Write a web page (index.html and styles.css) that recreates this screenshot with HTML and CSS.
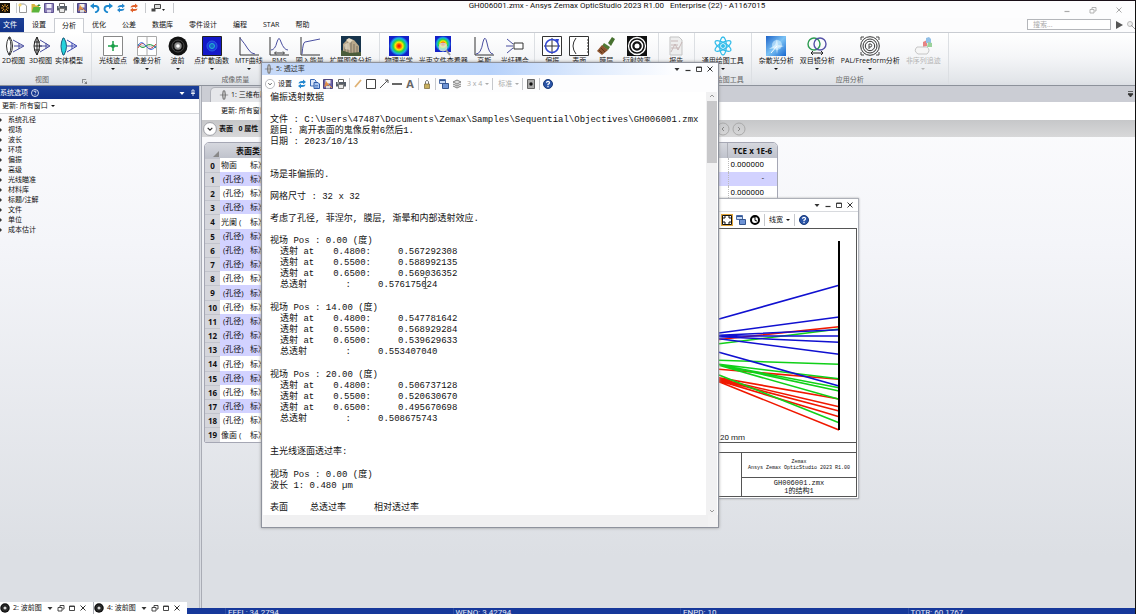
FILE: index.html
```html
<!DOCTYPE html>
<html lang="zh-CN">
<head>
<meta charset="utf-8">
<title>GH006001.zmx - Ansys Zemax OpticStudio</title>
<link rel="stylesheet" href="styles.css">
</head>
<body>
<svg class="defs" aria-hidden="true">
  <defs>
    <symbol id="refresh" viewBox="0 0 10 10"><path d="M1.5 4.5Q2 2 5 2h1V.5L9 3 6 5.200V4H5Q3 4 1.500 4.500zM8.500 5.500Q8 8 5 8H4v1.500L1 7l3-2.200V6h1q2 0 3.500-.5z" fill="currentColor"/></symbol>
    <symbol id="save" viewBox="0 0 10 10"><path d="M.5.5h9v9h-9z" fill="#8d80b8" stroke="#5c5190"/><path d="M2.500 1h5v4h-5z" fill="#f3f1fb"/><path d="M3 7h4v2.500H3z" fill="#dcd7ee"/></symbol>
    <symbol id="saveas" viewBox="0 0 10 10"><path d="M.5.5h9v9h-9z" fill="#6c62a8" stroke="#4c4580"/><path d="M2.500 1h5v3.500h-5z" fill="#f5efe8"/><path d="M3 7h4v2.500H3z" fill="#ddd"/><path d="M1 8l2-6 3 4z" fill="#d98a4e"/><path d="M3 3l6 6" stroke="#f2a13c"/></symbol>
    <symbol id="print" viewBox="0 0 10 10"><path d="M2.500 3V.5h5V3" fill="#fff" stroke="#666"/><path d="M0 3h10v4.500H0z" fill="#555c66"/><path d="M2.500 5.500h5v4h-5z" fill="#e8e8e8" stroke="#777"/><path d="M1 4h2" stroke="#ddd"/></symbol>
    <symbol id="copy" viewBox="0 0 10 10"><path d="M.5.5h4L6 2v5H.5z" fill="#dce8fa" stroke="#3a68b4"/><path d="M4 3.500h4L9.500 5v4.500H4z" fill="#a9c6f1" stroke="#2f5ba8"/><path d="M5 6.500h3M5 8h3" stroke="#2f5ba8" stroke-width=".6"/></symbol>
    <symbol id="help" viewBox="0 0 10 10"><circle cx="5" cy="5" r="4.500" fill="#2b55a8" stroke="#173877"/><path d="M3.500 3.800Q3.500 2.300 5 2.300t1.500 1.400Q6.500 4.600 5 5.400v.8M5 7v1.200" fill="none" stroke="#fff" stroke-width="1.200"/></symbol>
    <symbol id="chevron" viewBox="0 0 12 12"><circle cx="6" cy="6" r="5.500" fill="#fff" stroke="#9a9ca3" stroke-width=".8"/><path d="M4 5l2 2 2-2" fill="none" stroke="#333"/></symbol>
    <symbol id="windows" viewBox="0 0 10 10"><path d="M.5.5h6v4h-6z" fill="#c9dbf6" stroke="#4b6ca8"/><path d="M3.500 4.500h6v5h-6z" fill="#6e93d4" stroke="#34558f"/><path d="M1 1.500h5" stroke="#34558f"/></symbol>
    <symbol id="lens" viewBox="0 0 10 12"><path d="M4 1h2q2 5 0 10H4q-2-5 0-10z" fill="#ddd" stroke="#555" stroke-width=".8"/><path d="M0 6h10M5 1v10" stroke="#666" stroke-width=".7"/></symbol>
    <symbol id="disc" viewBox="0 0 20 20"><circle cx="10" cy="10" r="9.500" fill="#111"/><circle cx="10" cy="10" r="6" fill="none" stroke="#4a4a4a"/><circle cx="10" cy="10" r="3.700" fill="#8b8b8b"/><circle cx="10" cy="10" r="1.800" fill="#fff"/></symbol>
    <symbol id="w-down" viewBox="0 0 8 8"><path d="M1.500 3h5L4 6z" fill="currentColor"/></symbol>
    <symbol id="w-min" viewBox="0 0 8 8"><path d="M1.500 5.500h5" stroke="currentColor" stroke-width="1.200"/></symbol>
    <symbol id="w-max" viewBox="0 0 8 8"><path d="M1.500 2h5v4.500h-5zM1.500 2.500h5" fill="none" stroke="currentColor" stroke-width=".9"/></symbol>
    <symbol id="w-restore" viewBox="0 0 8 8"><path d="M1 3.500h4V7H1zM3 3V1.500h4V5H5.500" fill="none" stroke="currentColor" stroke-width=".9"/></symbol>
    <symbol id="w-close" viewBox="0 0 8 8"><path d="M1.500 1.500l5 5m0-5l-5 5" stroke="currentColor"/></symbol>
    <radialGradient id="rainbow"><stop offset="0" stop-color="#e80000"/><stop offset=".2" stop-color="#ff5a00"/><stop offset=".38" stop-color="#ffe800"/><stop offset=".58" stop-color="#22d84a"/><stop offset=".78" stop-color="#18a9e8"/><stop offset="1" stop-color="#1420c8"/></radialGradient>
    <linearGradient id="sky" x2="1" y2="1"><stop offset="0" stop-color="#1d62c8"/><stop offset=".5" stop-color="#7cc3f5"/><stop offset="1" stop-color="#1566cf"/></linearGradient>
  </defs>
</svg>

<div class="app">
  <header class="titlebar">
    <div class="quick">
      <svg class="i10" viewBox="0 0 10 10"><path d="M0 0h10v10H0z" fill="#17110a"/><path d="M5 1v8M1 5h8M2 2l6 6M8 2L2 8" stroke="#d8922c"/><circle cx="5" cy="5" r="1.500" fill="#17110a"/></svg>
      <i class="sep near"></i>
      <button aria-label="新建"><svg class="i10" viewBox="0 0 10 10"><path d="M1.500 1h5l2 2v6.500h-7z" fill="#fff" stroke="#999"/><circle cx="2" cy="2" r="1.600" fill="#f4d66b"/></svg></button>
      <button aria-label="打开"><svg class="i10" viewBox="0 0 10 10"><path d="M.5 1h3l1 1.500H8V9H.5z" fill="#d7b33e"/><path d="M2.500 4H10L8 9.500H.5z" fill="#5bb43b"/><path d="M6 3l2-2 1.500 2z" fill="#2e8b2b"/></svg></button>
      <button aria-label="保存"><svg class="i10"><use href="#save"/></svg></button>
      <button aria-label="打印"><svg class="i10"><use href="#print"/></svg></button>
      <i class="sep"></i>
      <button aria-label="另存"><svg class="i10"><use href="#saveas"/></svg></button>
      <button aria-label="撤销"><svg class="i10" viewBox="0 0 10 10"><path d="M2 3h4q2.500.5 2.500 3T5 9.500" fill="none" stroke="#1c88cf" stroke-width="1.800"/><path d="M0 3l4-3v6z" fill="#1c88cf"/></svg></button>
      <button aria-label="重做"><svg class="i10" viewBox="0 0 10 10"><path d="M8 3H4q-2.500.5-2.500 3T5 9.500" fill="none" stroke="#1c88cf" stroke-width="1.800"/><path d="M10 3L6 0v6z" fill="#1c88cf"/></svg></button>
      <button aria-label="更新" class="blue"><svg class="i10"><use href="#refresh"/></svg></button>
      <button aria-label="全部更新" class="orange"><svg class="i10"><use href="#refresh"/></svg></button>
      <i class="sep"></i>
      <button aria-label="窗口" class="wide"><svg class="i14" viewBox="0 0 14 10"><path d="M3.500 1.500h6v4h-6z" fill="#ddd" stroke="#444"/><path d="M.5 5.500h4v3h-4z" fill="#444"/><path d="M11 6h3l-1.500 2z" fill="#222"/></svg></button>
      <i class="sep"></i>
    </div>
    <h1>GH006001.zmx - Ansys Zemax OpticStudio 2023 R1.00 &nbsp; Enterprise (22) - A1167015</h1>
    <div class="syscontrols">
      <button aria-label="最小化"><svg class="i8"><use href="#w-min"/></svg></button>
      <button aria-label="还原"><svg class="i8"><use href="#w-restore"/></svg></button>
      <button aria-label="关闭"><svg class="i8"><use href="#w-close"/></svg></button>
    </div>
  </header>

  <nav class="menu">
    <button class="file">文件</button><button>设置</button><button class="active">分析</button><button>优化</button><button>公差</button><button>数据库</button><button>零件设计</button><button>编程</button><button>STAR</button><button>帮助</button>
    <div class="find">
      <input type="text" placeholder="搜索..." aria-label="搜索">
      <button aria-label="开始"><svg class="i8" viewBox="0 0 8 8"><path d="M1 0l7 4-7 4z" fill="#555"/></svg></button>
      <button aria-label="查找"><svg class="i8" viewBox="0 0 8 8"><circle cx="3" cy="3" r="2.500" fill="#eee" stroke="#bbb"/><path d="M4 4l4 4" stroke="#999"/></svg></button>
    </div>
  </nav>

  <section class="ribbon">
    <div class="group">
      <div class="items">
        <button><svg viewBox="0 0 20 20"><path d="M5 1q4 9 0 18-5-9 0-18zM5 1h1q5 9 0 18H5" fill="#fff" stroke="#333"/><path d="M9 4l11 6-11 6M10 10h9M15 7v6" fill="none" stroke="#4a4fa0"/></svg>2D视图</button>
        <button><svg viewBox="0 0 20 20"><path d="M6 1q5 9 0 18-6-9 0-18zM6 1v18M3 10h8M3 6h6M3 14h6" fill="#eee" stroke="#222"/><path d="M9 4l10 6-10 6M9 10h9M15 7v6" fill="none" stroke="#4a4fa0"/></svg>3D视图</button>
        <button><svg viewBox="0 0 20 20"><path d="M5 2q5 8 0 17h-1q-4-9 0-17z" fill="#25d3dc" stroke="#1b5d7d"/><path d="M8 4l10 6-10 6M8 10h9M13 7v6" fill="none" stroke="#3c48b0"/></svg>实体模型</button>
      </div>
      <footer>视图</footer>
      <svg class="launcher" viewBox="0 0 6 6"><path d="M.5 5V.5H5M3 3l2.500 2.500M5.500 3v2.500H3" fill="none" stroke="#555" stroke-width=".8"/></svg>
    </div>
    <div class="group">
      <div class="items">
        <button class="drop"><svg viewBox="0 0 20 20"><path d="M.5.5h19v19H.5z" fill="#fff" stroke="#888"/><path d="M10 5v10M5 10h10" stroke="#1ba048" stroke-width="1.500"/><circle cx="10" cy="10" r="2" fill="#1ba048"/></svg>光线迹点</button>
        <button class="drop"><svg viewBox="0 0 20 20"><path d="M.5.5h19v19H.5zM0 10h20M10 0v20" fill="#fff" stroke="#aaa"/><path d="M1 8q4 6 8 2t10 2" fill="none" stroke="#2ba54c"/><path d="M1 12q4-8 8-2t10-2" fill="none" stroke="#d04848"/><path d="M1 10q3-7 8 0t10 0" fill="none" stroke="#3a6ce0"/></svg>像差分析</button>
        <button class="drop"><svg><use href="#disc"/></svg>波前</button>
        <button class="drop"><svg viewBox="0 0 20 20"><path d="M.5.500h19v19H.5z" fill="#1418c8" stroke="#222"/><circle cx="10" cy="10" r="5" fill="#1b35df" stroke="#2860e0"/><circle cx="10" cy="10" r="2.500" fill="#1765c9" stroke="#25b7cf"/></svg>点扩散函数</button>
        <button class="drop"><svg viewBox="0 0 20 20"><path d="M1 1v18h19" fill="none" stroke="#333"/><path d="M1 2q5 6 8 11 3 5 7 5" fill="none" stroke="#4a4fa0"/></svg>MTF曲线</button>
        <button class="drop"><svg viewBox="0 0 20 20"><path d="M1 1v18h19M6 17h9M7 15.500L5.500 17 7 18.500M14 15.500l1.500 1.500-1.500 1.500" fill="none" stroke="#333"/><path d="M2 14q4 0 6-8 2-7 4 0 3 8 7 8" fill="none" stroke="#4a4fa0"/></svg>RMS</button>
        <button class="drop"><svg viewBox="0 0 20 20"><path d="M1 1v18h19" fill="none" stroke="#333"/><path d="M2 18Q3 6 5 6l15-3" fill="none" stroke="#4a4fa0"/></svg>圈入能量</button>
        <button class="drop"><svg viewBox="0 0 20 20"><path d="M0 0h20v20H0z" fill="#17344c"/><path d="M2 16V8l5-5 6 1 5 6v7l-6 2z" fill="#b9a88b"/><path d="M4 9v7M7 6v11M10 5v12M13 8v9M16 10v7" stroke="#5f5a50" stroke-width=".7"/><path d="M0 14l9 3 11-1v4H0z" fill="#4b5c3a"/><path d="M5 4l3-2 4 2-3 3z" fill="#e8dcc3"/><path d="M3 9l5-3 1 8-5-1z" fill="#e6dcc8" fill-opacity=".7"/></svg>扩展图像分析</button>
      </div>
      <footer>成像质量</footer>
    </div>
    <div class="group tight">
      <div class="items">
        <button class="drop"><svg viewBox="0 0 20 20"><path d="M0 0h20v20H0z" fill="#1420c8"/><circle cx="10" cy="10" r="10" fill="url(#rainbow)"/></svg>物理光学</button>
        <button class="drop"><svg viewBox="0 0 20 20"><path d="M2 0h16v16H2z" fill="#1420c8"/><circle cx="10" cy="8" r="8" fill="url(#rainbow)"/><circle cx="10" cy="11" r="4" fill="#dcecf0" fill-opacity=".7" stroke="#ccc"/><path d="M13 14l4 5" stroke="#999" stroke-width="2"/></svg>光束文件查看器</button>
        <button class="drop"><svg viewBox="0 0 20 20"><path d="M1 1v18h19" fill="none" stroke="#333"/><path d="M2 18q5 0 7-12 2-8 4 1 2 11 6 11" fill="none" stroke="#4a4fa0"/></svg>高斯</button>
        <button class="drop"><svg viewBox="0 0 20 20"><path d="M9 7h9v6H9z" fill="#fff" stroke="#333"/><path d="M2 3l6 5M1 10h7M2 17l6-5" stroke="#4a4fa0"/></svg>光纤耦合</button>
      </div>
      <footer>激光与光纤</footer>
    </div>
    <div class="group">
      <div class="items">
        <button class="drop"><svg viewBox="0 0 20 20"><path d="M.5.5h19v19H.5zM10 2v16M2 10h16" fill="#fff" stroke="#333"/><circle cx="10" cy="10" r="6.500" fill="none" stroke="#3146cf" stroke-width="1.500"/><path d="M13 3l4 0-1 4z" fill="#3146cf"/></svg>偏振</button>
        <button class="drop"><svg viewBox="0 0 20 20"><path d="M.5.5h19v19H.5z" fill="#fff" stroke="#333"/><path d="M7 2Q1 10 7 18M18 4h1M18 7h1M18 10h1M18 13h1M18 16h1" fill="none" stroke="#333"/></svg>表面</button>
        <button class="drop"><svg viewBox="0 0 20 20"><path d="M12 7l4-6 3 2-4 7z" fill="#46702f"/><path d="M8 7l6 4-2 3-6-4z" fill="#4f7a35"/><path d="M6 9l6 5-6 5-5-4z" fill="#8c5430"/><path d="M3 14l3 3M5 12l4 4" stroke="#5f3319"/></svg>膜层</button>
        <button class="drop"><svg viewBox="0 0 20 20"><path d="M0 0h20v20H0z" fill="#111"/><circle cx="10" cy="10" r="8.500" fill="none" stroke="#fff" stroke-width="1.300"/><circle cx="10" cy="10" r="5.500" fill="none" stroke="#fff" stroke-width="1.500"/><circle cx="10" cy="10" r="2.500" fill="#fff"/></svg>衍射效率</button>
      </div>
      <footer>偏振与表面</footer>
    </div>
    <div class="group">
      <div class="items">
        <button class="drop"><svg viewBox="0 0 20 20"><path d="M4 1h9l3 3v15H4z" fill="#eee" stroke="#c3c3c3"/><path d="M5 16l4-8 3 6 4-8M5 5h7M5 9h7M5 12h8" fill="none" stroke="#c8b8b8"/></svg>报告</button>
      </div>
      <footer>报告</footer>
    </div>
    <div class="group">
      <div class="items">
        <button class="drop"><svg viewBox="0 0 20 20"><g fill="none" stroke="#35bdea" stroke-width="1.300"><ellipse cx="10" cy="10" rx="9" ry="3.300" transform="rotate(30 10 10)"/><ellipse cx="10" cy="10" rx="9" ry="3.300" transform="rotate(90 10 10)"/><ellipse cx="10" cy="10" rx="9" ry="3.300" transform="rotate(150 10 10)"/></g><circle cx="10" cy="10" r="2" fill="#35bdea"/></svg>通用绘图工具</button>
      </div>
      <footer>通用绘图工具</footer>
    </div>
    <div class="group">
      <div class="items">
        <button class="drop"><svg viewBox="0 0 20 20"><path d="M0 0h20v20H0z" fill="url(#sky)"/><circle cx="11" cy="9" r="5" fill="#d3efff" fill-opacity=".6"/><path d="M3 13l6-4 2-6 1 6 6 1-6 2-1 6-1-6z" fill="#e6f6ff" fill-opacity=".7"/><path d="M5 17l6-7" stroke="#fff"/></svg>杂散光分析</button>
        <button class="drop"><svg viewBox="0 0 20 20"><circle cx="7" cy="8" r="6" fill="none" stroke="#2c9b50" stroke-width="1.400"/><circle cx="13" cy="8" r="6" fill="none" stroke="#5552a8" stroke-width="1.400"/><path d="M4 17h12M6 15l-2 2 2 2M14 15l2 2-2 2" fill="none" stroke="#222"/></svg>双目镜分析</button>
        <button class="drop"><svg viewBox="0 0 20 20"><g fill="none" stroke="#333"><circle cx="10" cy="10" r="9.300"/><circle cx="10" cy="10" r="7"/><circle cx="10" cy="10" r="4.700"/><path d="M9 13V8h2q1.500 1.300 0 3H9M1 4V1h3M16 1h3v3M1 16v3h3M16 19h3v-3" stroke-width=".9"/></g></svg>PAL/Freeform分析</button>
        <button class="drop" disabled><svg viewBox="0 0 20 20"><path d="M10 6l4-2v6l-4 1z" fill="#e78484"/><path d="M13 2l3-1 2 2v4h-5z" fill="#91bfe6"/><path d="M15 6l4 1v4h-5z" fill="#9bd29b"/><path d="M4 11h10q4 3 0 7H5q-5-3-1-7z" fill="#f6f6f6" stroke="#c6c6c6"/></svg>非序列追迹</button>
      </div>
      <footer>应用分析</footer>
    </div>
  </section>

  <main class="workspace">
    <aside class="sidebar">
      <div class="panelhead"><span>系统选项</span><svg class="i8" viewBox="0 0 8 8"><circle cx="4" cy="4" r="3.500" fill="none" stroke="#fff" stroke-width=".8"/><path d="M3 3q0-1 1-1t1 1q0 .7-1 1.200M4 5.300v.9" fill="none" stroke="#fff" stroke-width=".8"/></svg><i class="grow"></i><svg class="i8"><use href="#w-down"/></svg><svg class="i8" viewBox="0 0 8 8"><path d="M3 1h2v3H3zM2 4.500h4M4 4.500V7" fill="none" stroke="#fff" stroke-width=".8"/></svg></div>
      <button class="update">更新: 所有窗口<i class="caret"></i></button>
      <ul class="tree">
        <li>系统孔径</li><li>视场</li><li>波长</li><li>环境</li><li>偏振</li><li>高级</li><li>光线瞄准</li><li>材料库</li><li>标题/注解</li><li>文件</li><li>单位</li><li>成本估计</li>
      </ul>
    </aside>

    <section class="editor">
      <div class="doctabs"><button><svg class="i10"><use href="#lens"/></svg>1: 三维布局图</button><i class="grow"></i><svg class="i8" viewBox="0 0 8 8"><path d="M2 1.500h5M2 4l2.500 3L7 4zM2 3.500h5" fill="#333" stroke="#333" stroke-width=".7"/></svg></div>
      <button class="update wideupdate">更新: 所有窗口<i class="caret"></i></button>
      <div class="surface">
        <svg class="i14"><use href="#chevron"/></svg><b>表面 &nbsp; 0 属性</b>
        <div class="pager"><svg class="i14" viewBox="0 0 14 14"><circle cx="7" cy="7" r="6" fill="none" stroke="#aaa"/><path d="M8 5L6 7l2 2" fill="none" stroke="#888"/></svg><svg class="i14" viewBox="0 0 14 14"><circle cx="7" cy="7" r="6" fill="none" stroke="#aaa"/><path d="M6 5l2 2-2 2" fill="none" stroke="#888"/></svg></div>
      </div>
      <table class="lde">
        <thead><tr><th class="no"><svg class="i8" viewBox="0 0 8 8"><path d="M8 2v6H2z" fill="#888"/></svg></th><th class="type">表面类型</th><th class="mid">净口径</th><th class="tce">TCE x 1E-6</th></tr></thead>
        <tbody>
          <tr><th>0</th><td><span class="name">物面</span>标准面</td><td></td><td>0.000000</td></tr>
          <tr class="hl"><th>1</th><td><span>(孔径)</span>标准面</td><td></td><td>-</td></tr>
          <tr><th>2</th><td><span>(孔径)</span>标准面</td><td></td><td>0.000000</td></tr>
          <tr class="hl"><th>3</th><td><span>(孔径)</span>标准面</td><td></td><td>-</td></tr>
          <tr><th>4</th><td><span class="name">光阑 (</span>标准面</td><td></td><td>0.000000</td></tr>
          <tr class="hl"><th>5</th><td><span>(孔径)</span>标准面</td><td></td><td>-</td></tr>
          <tr class="hl"><th>6</th><td><span>(孔径)</span>标准面</td><td></td><td>-</td></tr>
          <tr class="hl"><th>7</th><td><span>(孔径)</span>标准面</td><td></td><td>-</td></tr>
          <tr><th>8</th><td><span>(孔径)</span>标准面</td><td></td><td>0.000000</td></tr>
          <tr class="hl"><th>9</th><td><span>(孔径)</span>标准面</td><td></td><td>-</td></tr>
          <tr><th>10</th><td><span>(孔径)</span>标准面</td><td></td><td>0.000000</td></tr>
          <tr class="hl"><th>11</th><td><span>(孔径)</span>标准面</td><td></td><td>-</td></tr>
          <tr class="hl"><th>12</th><td><span>(孔径)</span>标准面</td><td></td><td>-</td></tr>
          <tr class="hl"><th>13</th><td><span>(孔径)</span>标准面</td><td></td><td>-</td></tr>
          <tr><th>14</th><td><span>(孔径)</span>标准面</td><td></td><td>0.000000</td></tr>
          <tr class="hl"><th>15</th><td><span>(孔径)</span>标准面</td><td></td><td>-</td></tr>
          <tr><th>16</th><td><span>(孔径)</span>标准面</td><td></td><td>0.000000</td></tr>
          <tr class="hl"><th>17</th><td><span>(孔径)</span>标准面</td><td></td><td>-</td></tr>
          <tr><th>18</th><td><span>(孔径)</span>标准面</td><td></td><td>0.000000</td></tr>
          <tr><th>19</th><td><span class="name">像面 (</span>标准面</td><td></td><td>0.000000</td></tr>
        </tbody>
      </table>
    </section>
  </main>

  <footer class="status"><span>EFFL: 34.2794</span><span>WFNO: 3.42794</span><span>ENPD: 10</span><span>TOTR: 60.1767</span></footer>
</div>

<section class="window layout">
  <header><i class="grow"></i><button aria-label="菜单"><svg class="i8"><use href="#w-down"/></svg></button><button aria-label="最小化"><svg class="i8"><use href="#w-min"/></svg></button><button aria-label="最大化"><svg class="i8"><use href="#w-max"/></svg></button><button aria-label="关闭"><svg class="i8"><use href="#w-close"/></svg></button></header>
  <div class="tools">
    <button class="on" aria-label="适合窗口"><svg class="i10" viewBox="0 0 10 10"><path d="M.5.500h9v9h-9z" fill="#fff" stroke="#111"/><path d="M2 4V2h2M6 2h2v2M8 6v2H6M4 8H2V6" fill="none" stroke="#111"/></svg></button>
    <button aria-label="窗口"><svg class="i10"><use href="#windows"/></svg></button>
    <button aria-label="重置"><svg class="i10" viewBox="0 0 10 10"><circle cx="5" cy="5" r="4" fill="#fff" stroke="#000" stroke-width="2"/><path d="M5 2v3.500L7 6M3.500 3L5 1.500" fill="none" stroke="#000"/></svg></button>
    <i class="sep"></i><button class="text">线宽<i class="caret"></i></button><i class="sep"></i>
    <button aria-label="帮助"><svg class="i10"><use href="#help"/></svg></button>
  </div>
  <div class="plot">
    <svg viewBox="0 0 256 213" class="rays">
      <g fill="none" stroke-width="1.600">
        <path stroke="#f01800" d="M118 110.500L238 97.700M118 140.300L238 150.300M118 148.700L238 170M118 149.700L238 177.700M118 150.700L238 182M118 151.700L238 187.700M118 152.700L238 201"/>
        <path stroke="#10d018" d="M118 114.700L190 106 238 100M118 131.300L238 135.300M118 135.300L238 149.700M118 135.700L238 158.700M118 136L238 162M118 136.300L238 170.300M118 146L238 193.700"/>
        <path stroke="#1010d0" d="M118 90L238 56.300M118 104L238 88M118 106.300L238 100.700M118 107H238M118 107.700L238 113.300M118 109.700L238 125.300M118 123.300L238 157"/>
      </g>
      <path d="M238 12v189" stroke="#000" stroke-width="2"/>
      <text x="119" y="211">20 mm</text>
    </svg>
    <div class="strip"></div>
    <div class="block">
      <p class="small">Zemax<br>Ansys Zemax OpticStudio 2023 R1.00</p>
      <p>GH006001.zmx<br>1的结构1</p>
    </div>
  </div>
</section>

<section class="window report">
  <header><svg class="i10"><use href="#lens"/></svg><span>5: 透过率</span><i class="grow"></i><button aria-label="菜单"><svg class="i8"><use href="#w-down"/></svg></button><button aria-label="最小化"><svg class="i8"><use href="#w-min"/></svg></button><button aria-label="最大化"><svg class="i8"><use href="#w-max"/></svg></button><button aria-label="关闭"><svg class="i8"><use href="#w-close"/></svg></button></header>
  <div class="tools">
    <button class="text setup"><svg class="i10"><use href="#chevron"/></svg>设置</button>
    <button class="blue" aria-label="更新"><svg class="i10"><use href="#refresh"/></svg></button>
    <button aria-label="复制"><svg class="i10"><use href="#copy"/></svg></button>
    <button aria-label="另存"><svg class="i10"><use href="#saveas"/></svg></button>
    <button aria-label="打印"><svg class="i10"><use href="#print"/></svg></button>
    <i class="sep"></i>
    <button aria-label="铅笔"><svg class="i10" viewBox="0 0 10 10"><path d="M2 8l6-7" stroke="#dfb173" stroke-width="1.800"/></svg></button>
    <button aria-label="矩形"><svg class="i10" viewBox="0 0 10 10"><path d="M.5.500h9v9h-9z" fill="#fff" stroke="#444"/></svg></button>
    <button aria-label="箭头"><svg class="i10" viewBox="0 0 10 10"><path d="M1 9l8-8M6 1h3v3" fill="none" stroke="#555"/></svg></button>
    <button aria-label="直线"><svg class="i10" viewBox="0 0 10 10"><path d="M0 5h10" stroke="#666" stroke-width="2"/></svg></button>
    <button aria-label="文字" class="letter">A</button>
    <i class="sep"></i>
    <button aria-label="锁定"><svg class="i10" viewBox="0 0 10 10"><path d="M3.500 5V2.500q1.500-2.500 3 0V5" fill="none" stroke="#777"/><path d="M2.500 5h5v4.500h-5z" fill="#c9b05f" stroke="#776633" stroke-width=".7"/></svg></button>
    <i class="sep"></i>
    <button aria-label="窗口"><svg class="i10"><use href="#windows"/></svg></button>
    <button aria-label="图层"><svg class="i10" viewBox="0 0 10 10"><path d="M1 3l4-2 4 2-4 2zM1 5l4 2 4-2M1 7l4 2 4-2" fill="#ddd" stroke="#777" stroke-width=".9"/></svg></button>
    <button class="text dim">3 x 4<i class="caret"></i></button>
    <i class="sep"></i><button class="text dim">标准<i class="caret"></i></button><i class="sep"></i>
    <button aria-label="显示"><svg class="i10" viewBox="0 0 10 10"><path d="M1.500.500h7v9h-7z" fill="#aaa" stroke="#666"/><circle cx="5" cy="5" r="1.700" fill="#111"/></svg></button>
    <i class="sep"></i>
    <button aria-label="帮助"><svg class="i10"><use href="#help"/></svg></button>
  </div>
  <div class="content">
    <article>
      <section>偏振透射数据</section>
      <section><p>文件 : C:\Users\47487\Documents\Zemax\Samples\Sequential\Objectives\GH006001.zmx</p><p>题目: 离开表面的鬼像反射6然后1.</p><p>日期 : 2023/10/13</p></section>
      <section class="late">场是非偏振的.</section>
      <section>网格尺寸 : 32 x 32</section>
      <section>考虑了孔径, 菲涅尔, 膜层, 渐晕和内部透射效应.</section>
      <section><p>视场 Pos : 0.00 (度)</p><p class="row"><span>透射 at</span><span>0.4800:</span><span>0.567292308</span></p><p class="row"><span>透射 at</span><span>0.5500:</span><span>0.588992135</span></p><p class="row"><span>透射 at</span><span>0.6500:</span><span>0.569036352</span></p><p class="row sum"><span>总透射</span><span>:</span><span>0.576175024</span></p></section>
      <section class="field"><p>视场 Pos : 14.00 (度)</p><p class="row"><span>透射 at</span><span>0.4800:</span><span>0.547781642</span></p><p class="row"><span>透射 at</span><span>0.5500:</span><span>0.568929284</span></p><p class="row"><span>透射 at</span><span>0.6500:</span><span>0.539629633</span></p><p class="row sum"><span>总透射</span><span>:</span><span>0.553407040</span></p></section>
      <section class="field"><p>视场 Pos : 20.00 (度)</p><p class="row"><span>透射 at</span><span>0.4800:</span><span>0.506737128</span></p><p class="row"><span>透射 at</span><span>0.5500:</span><span>0.520630670</span></p><p class="row"><span>透射 at</span><span>0.6500:</span><span>0.495670698</span></p><p class="row sum"><span>总透射</span><span>:</span><span>0.508675743</span></p></section>
      <section class="late">主光线逐面透过率:</section>
      <section class="field"><p>视场 Pos : 0.00 (度)</p><p>波长 1: 0.480 µm</p></section>
      <section class="cols"><span>表面</span><span>总透过率</span><span>相对透过率</span></section>
    </article>
    <div class="vbar"><svg class="i8" viewBox="0 0 8 8"><path d="M2 5l2-2 2 2" fill="none" stroke="#999"/></svg><div class="thumb"></div><i class="grow"></i><svg class="i8" viewBox="0 0 8 8"><path d="M2 3l2 2 2-2" fill="none" stroke="#999"/></svg></div>
  </div>
  <div class="hbar"></div>
  <svg class="ibeam" viewBox="0 0 5 12"><path d="M.5.500h4M2.500.500v11M.5 11.500h4" fill="none" stroke="#555" stroke-width=".8"/></svg>
</section>

<div class="docked">
  <div class="mini"><svg class="i10"><use href="#disc"/></svg><span>2: 波前图</span><button aria-label="菜单"><svg class="i8"><use href="#w-down"/></svg></button><button aria-label="还原"><svg class="i8"><use href="#w-restore"/></svg></button><button aria-label="最大化"><svg class="i8"><use href="#w-max"/></svg></button><button aria-label="关闭"><svg class="i8"><use href="#w-close"/></svg></button></div>
  <div class="mini"><svg class="i10"><use href="#disc"/></svg><span>4: 波前图</span><button aria-label="菜单"><svg class="i8"><use href="#w-down"/></svg></button><button aria-label="还原"><svg class="i8"><use href="#w-restore"/></svg></button><button aria-label="最大化"><svg class="i8"><use href="#w-max"/></svg></button><button aria-label="关闭"><svg class="i8"><use href="#w-close"/></svg></button></div>
</div>
</body>
</html>
```

FILE: styles.css
```css
* { box-sizing: border-box; }
body {
  margin: 0;
  font: 7px/10px "Open Sans", "Noto Sans CJK SC", sans-serif;
  color: #111;
  background: #d9dce2;
}
button { font: inherit; color: inherit; background: none; border: 0; padding: 0; display: flex; align-items: center; }
p, h1, ul { margin: 0; padding: 0; }
svg { display: block; flex: none; }
i { font-style: normal; flex: none; }
.defs { position: absolute; width: 0; height: 0; }
.i8 { width: 8px; height: 8px; }
.i10 { width: 10px; height: 10px; }
.i14 { width: 14px; height: 14px; }
.grow { flex: 1; }
.sep { width: 1px; height: 10px; background: #c6c8cc; }
.caret { border: 2px solid transparent; border-top-color: currentColor; border-bottom: 0; margin-left: 3px; }
.blue { color: #2487cf; }
.orange { color: #e0602a; }

.app { height: 100vh; display: flex; flex-direction: column; overflow: hidden; border-top: 1px solid #1a1018; border-right: 1px solid #111; }

/* Title bar */
.titlebar { flex: none; height: 17px; display: grid; grid-template-columns: 1fr auto 1fr; background: #fdfdfe; }
.quick { display: flex; align-items: center; gap: 3px; height: 14px; }
.quick .sep { margin-left: 3px; }
.quick .near { margin-right: -2px; }
.quick .wide { margin: 0 2px; }
.titlebar h1 { font: 400 8px/9px Roboto, sans-serif; white-space: pre; padding-left: 99px; }
.syscontrols { display: flex; justify-content: flex-end; align-items: flex-end; gap: 18px; padding: 0 12px 4px 0; color: #aaa; }

/* Menu tabs */
.menu { flex: none; height: 15px; display: flex; background: #fcfcfd; border-bottom: 1px solid #c9ccd2; }
.menu > button { padding: 0 8px; }
.menu > .file { padding: 0 7px 0 3px; background: linear-gradient(#1d4096, #12328a); color: #fff; }
.menu > .active { height: 15px; border: 1px solid #c9ccd2; border-bottom: 0; padding: 0 7px; background: #fff; }
.find { margin-left: auto; display: flex; align-items: center; gap: 4px; padding-bottom: 1px; }
.find input { width: 84px; height: 11px; border: 1px solid #b4b6ba; padding: 0 5px; font: inherit; background: #fff; }
.find input::placeholder { color: #aaa; }

/* Ribbon */
.ribbon { flex: none; height: 53px; display: flex; background: linear-gradient(#fff, #f5f6f8 45%, #e3e6ea 90%, #dcdfe4); border-bottom: 1px solid #8d929b; }
.group { position: relative; display: flex; flex-direction: column; padding: 3px 4px 0; border-right: 1px solid #dcdfe3; }
.group.tight { padding-left: 2px; padding-right: 2px; }
.group:first-child { padding-left: 0; padding-right: 7px; }
.items { display: flex; }
.items button { flex-direction: column; justify-content: flex-start; min-width: 27px; height: 36px; padding: 0 3px; line-height: 10px; white-space: nowrap; }
.group:first-child button { padding: 0 1px; }
.items svg { width: 20px; height: 20px; }
.items button:disabled { color: #b5b5b5; }
.drop::after { content: ""; border: 2px solid transparent; border-top-color: currentColor; border-bottom: 0; margin-top: 2px; }
.group footer { text-align: center; color: #666; line-height: 10px; margin-top: 3px; }
.launcher { position: absolute; right: 4px; bottom: 1px; width: 5px; height: 5px; }

/* Workspace */
.workspace { flex: 1; min-height: 0; display: flex; }
.sidebar { flex: none; width: 200px; border-right: 1px solid #b9bcc4; background: linear-gradient(#fdfdfe, #f4f5f9 30%, #dcdfe4 90%); }
.panelhead { display: flex; align-items: center; gap: 3px; height: 13px; padding-right: 2px; color: #fff; background: linear-gradient(#1b3f98, #10308a); }
.update { width: 100%; height: 15px; padding-left: 2px; background: #fff; border-bottom: 1px solid #d4d6da; }
.wideupdate { height: 18px; padding-left: 19px; border: 0; }
.tree { list-style: none; padding-top: 1px; }
.tree li { display: flex; align-items: center; height: 10px; }
.tree li::before { content: ""; width: 0; border: 2px solid transparent; border-left-color: #333; border-right: 0; margin-right: 6px; }

.editor { flex: 1; min-width: 0; margin-left: 1px; border-left: 1px solid #a9acb5; background: linear-gradient(#fdfdfe, #f4f5f9 30%, #dcdfe4 90%); }
.doctabs { display: flex; align-items: center; height: 16px; background: #cbcdd4; padding-right: 1px; }
.doctabs button { gap: 2px; height: 15px; margin: 1px 0 0 8px; padding: 0 8px; border: 1px solid #b0b2b9; border-bottom: 0; border-radius: 5px 3px 0 0; background: #e6e7ea; white-space: nowrap; }
.surface { display: flex; align-items: center; gap: 2px; height: 17px; padding-left: 1px; background: linear-gradient(#c6c7c9, #d8d8d9); }
.pager { display: flex; gap: 2px; margin-left: 456px; }

.lde { margin: 5px 0 0 2px; width: 574px; table-layout: fixed; border-collapse: separate; border-spacing: 0; border: 1px solid #a5a7b4; border-radius: 5px 5px 2px 2px; overflow: hidden; font-size: 8px; line-height: 12px; background: #fff; }
.lde th, .lde td { padding: 0; white-space: nowrap; }
.lde thead th { height: 15px; background: linear-gradient(#d6d8de, #bfc2cc); }
.lde .no { width: 15px; }
.lde .no svg { margin: 5px 0 0 6px; }
.lde .type { width: 64px; }
.lde .tce { width: 49px; }
.lde .mid { text-align: right; padding-right: 8px; border-right: 1px solid #aeb0b8; }
.lde tbody tr { height: 14px; }
.lde tbody tr:nth-child(5n) { height: 15px; }
.lde tbody th { background: #d5d6dc; border-top: 1px solid #c2c4cc; }
.lde td:nth-child(2) { padding-left: 1px; }
.lde td span { display: inline-block; width: 29px; padding-left: 2px; }
.lde td .name { padding-left: 0; }
.lde td:last-child { font-family: Roboto, sans-serif; text-align: right; padding-right: 13px; border-left: 1px dotted #bbb; }
.hl { background: #d2d2ff; }

.status { flex: none; display: grid; grid-template-columns: repeat(4, 1fr); height: 6px; padding-left: 225px; overflow: hidden; background: #16389a; color: #e4e9f5; font: 8px/9px Roboto, sans-serif; }
.status span { padding-left: 2px; border-left: 1px solid #2d4da5; }

/* Floating windows */
.window { position: absolute; background: #fff; border: 1px solid #adb0b8; display: flex; flex-direction: column; }
.window header { flex: none; display: flex; align-items: center; height: 12px; padding-right: 3px; color: #333; }
.window header button { width: 11px; justify-content: center; }
.tools { flex: none; display: flex; align-items: center; height: 17px; gap: 3px; }
.tools .sep { height: 12px; }
.tools .text { gap: 3px; white-space: nowrap; }
.tools .text .caret { margin-left: 0; }
.tools .setup { margin-right: 2px; }
.tools .dim { color: #aaa; margin-left: 2px; }
.letter { font-size: 11px; font-weight: 700; color: #666; width: 10px; justify-content: center; }

.layout { left: 600px; top: 198px; width: 259px; box-shadow: 0 0 2px #aaa; padding-bottom: 1px; }
.layout .tools { padding-left: 121px; gap: 4px; border-top: 1px solid #d8dade; }
.layout .on { background: #f8c65c; outline: 1px solid #e2a63a; }
.plot { border: 1px solid #555; border-left: 0; margin-right: 1px; }
.rays { width: 256px; height: 213px; }
.rays text { font: 8px Roboto, sans-serif; fill: #222; }
.strip { height: 11px; border: solid #555; border-width: 1px 0; }
.block { margin-left: 140px; border-left: 1px solid #555; text-align: center; font: 7px/8px "Liberation Mono", "Noto Sans CJK SC", monospace; }
.block p { padding: 1px 0; }
.block .small { font-size: 5px; line-height: 6px; padding: 6px 0; border-bottom: 1px solid #555; white-space: nowrap; }

.report { left: 261px; top: 62px; width: 458px; border-color: #8f939d; background: #f2f2f3; box-shadow: 0 0 3px #999; }
.report header { background: linear-gradient(90deg, #c6d9f8, #b6d1fa 50%, #dfebfd 72%, #fcfdff 90%); padding-left: 2px; }
.report header span { padding-left: 2px; }
.report .tools { background: #fdfdfe; padding-left: 3px; }
.content { display: flex; background: #fff; margin-left: 1px; }
article { flex: 1; min-width: 0; display: flex; flex-direction: column; gap: 11px; padding: 1px 0 1px 7px; font: 9px/11px "Liberation Mono", "Noto Sans CJK SC", monospace; color: #111; white-space: nowrap; }
.late { margin-top: 11px; }
.field { margin-top: 1px; }
.row { display: grid; grid-template-columns: 41px 50px 1fr; padding-left: 10px; }
.row span:nth-child(2) { text-align: right; }
.row span:nth-child(3) { padding-left: 27px; }
.row.sum { grid-template-columns: 41px 30px 1fr; }
.cols { display: grid; grid-template-columns: 40px 64px 1fr; }
.vbar { flex: none; width: 11px; display: flex; flex-direction: column; align-items: center; background: #f1f1f2; margin-right: 1px; }
.thumb { width: 10px; height: 62px; margin-top: 1px; background: #c8c8ca; }
.hbar { height: 12px; margin: 0 10px 0 3px; background: #f0f0f1; }
.ibeam { position: absolute; left: 161px; top: 214px; width: 5px; height: 12px; }

/* Minimised windows */
.docked { position: absolute; left: 0; bottom: 0; display: flex; gap: 1px; background: #adb0b8; }
.mini { display: flex; align-items: center; height: 12px; width: 93px; padding-right: 5px; background: #fff; color: #333; }
.mini span { flex: 1; padding-left: 3px; white-space: nowrap; color: #111; }
.mini button { width: 11px; justify-content: center; }
```
